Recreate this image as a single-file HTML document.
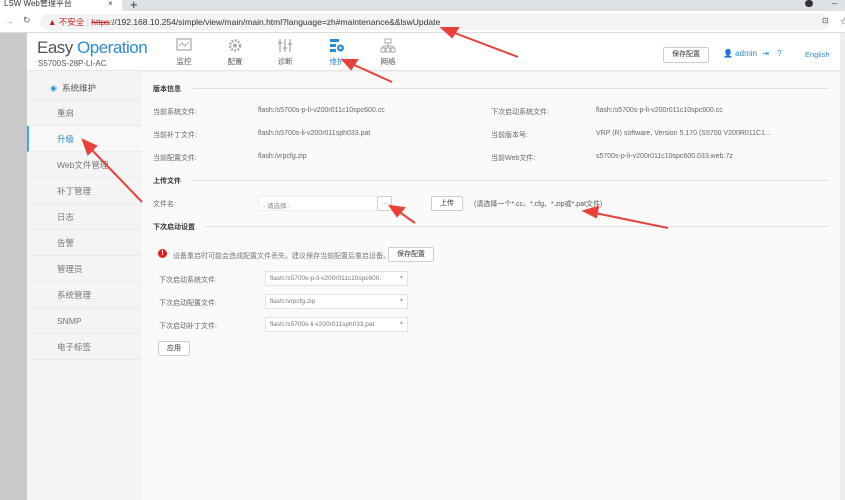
<!DOCTYPE html>
<html><head><meta charset="utf-8"><style>
*{margin:0;padding:0;box-sizing:border-box}
body{width:845px;height:500px;overflow:hidden;background:#fafafa;font-family:"Liberation Sans","Noto Sans CJK SC",sans-serif;position:relative;font-size:7px;color:#555}
.a{position:absolute;white-space:nowrap}
.tabbar{position:absolute;left:0;top:0;width:845px;height:11px;background:#dee1e6}
.tab{position:absolute;left:0;top:0;width:122px;height:11px;background:#fff;font-size:8px;color:#333;padding-left:4px;line-height:8px}
.addr{position:absolute;left:0;top:11px;width:845px;height:22px;background:#fff;border-bottom:1px solid #ddd}
.url{position:absolute;left:40px;top:14px;width:790px;height:16px;background:#f1f3f4;border-radius:8px}
.lstrip{position:absolute;left:0;top:33px;width:27px;height:467px;background:#c9c9c9}
.hdr{position:absolute;left:27px;top:33px;width:818px;height:37px;background:#fff;box-shadow:0 1px 2px #ddd}
.side{position:absolute;left:27px;top:71px;width:115px;height:429px;background:#f4f4f4}
.si{position:absolute;left:0;width:115px;height:26px;border-bottom:1px solid #ebebeb;font-size:8.5px;color:#777;padding-left:30px;line-height:26px}
.sec{position:absolute;font-size:7px;font-weight:bold;color:#333}
.line{position:absolute;height:1px;background:#e2e2e2}
.lbl{position:absolute;font-size:7px;color:#666;white-space:nowrap}
.btn{position:absolute;border:1px solid #ccc;border-radius:2px;background:#fff;font-size:7px;color:#333;text-align:center}
.sel{position:absolute;left:265px;width:143px;height:15px;border:1px solid #e3e3e3;background:#fff;font-size:6.5px;color:#777;padding-left:4px;line-height:13px;white-space:nowrap;overflow:hidden}
.sel:after{content:"▾";position:absolute;right:4px;top:0;color:#aaa;font-size:6px}
.sel span{display:inline-block;width:118px;overflow:hidden}
.nav{position:absolute;top:38px;width:30px;text-align:center;font-size:7.5px;color:#555}
.nav svg{display:block;margin:0 auto 3px}
</style></head><body>
<div class="tabbar"></div>
<div class="tab">LSW Web管理平台<span style="position:absolute;left:108px;color:#333">×</span></div>
<div class="a" style="left:130px;top:-3px;font-size:13px;color:#333">+</div>
<div class="a" style="left:805px;top:0;width:8px;height:7px;border-radius:4px;background:#333"></div>
<div class="a" style="left:832px;top:-2px;font-size:9px;color:#333">–</div>
<div class="addr"></div>
<div class="a" style="left:5px;top:16px;font-size:9px;color:#999">→</div>
<div class="a" style="left:23px;top:15px;font-size:9px;color:#666">↻</div>
<div class="url"></div>
<div class="a" style="left:48px;top:16px;font-size:8.5px;color:#333"><span style="color:#c5221f">▲ 不安全</span> <span style="color:#ccc">|</span> <span style="color:#c5221f;text-decoration:line-through">https</span>://192.168.10.254/simple/view/main/main.html?language=zh#maintenance&amp;&amp;lswUpdate</div>
<div class="a" style="left:822px;top:16px;font-size:8px;color:#555">⊡</div>
<div class="a" style="left:840px;top:16px;font-size:8px;color:#555">☆</div>
<div class="lstrip"></div>
<div class="hdr"></div>
<div class="a" style="left:37px;top:38px;font-size:17px;letter-spacing:-0.5px;color:#555">Easy <span style="color:#2b8cd1">Operation</span></div>
<div class="a" style="left:38px;top:59px;font-size:8px;color:#555">S5700S-28P-LI-AC</div>
<div class="nav" style="left:169px"><svg width="16" height="15"><rect x="1" y="1" width="14" height="11" fill="none" stroke="#aaa" stroke-width="1.3"/><path d="M3 8 L6 5 L9 8 L13 4" fill="none" stroke="#aaa"/></svg>监控</div>
<div class="nav" style="left:220px"><svg width="16" height="15"><circle cx="8" cy="7.5" r="5" fill="none" stroke="#aaa" stroke-width="2.5" stroke-dasharray="2 1.3"/><circle cx="8" cy="7.5" r="2" fill="#aaa"/></svg>配置</div>
<div class="nav" style="left:270px"><svg width="16" height="15"><path d="M3 1V14M8 1V14M13 1V14" stroke="#aaa" stroke-width="1.3"/><path d="M1 5H5M6 10H10M11 6H15" stroke="#aaa" stroke-width="1.5"/></svg>诊断</div>
<div class="nav" style="left:322px;color:#2b8cd1"><svg width="16" height="15"><rect x="1" y="1" width="9" height="3" fill="#2b8cd1"/><rect x="1" y="6" width="6" height="3" fill="#2b8cd1"/><rect x="1" y="11" width="6" height="3" fill="#2b8cd1"/><circle cx="11.5" cy="10" r="3.5" fill="#2b8cd1"/><circle cx="11.5" cy="10" r="1.2" fill="#fff"/></svg>维护</div>
<div class="nav" style="left:373px"><svg width="16" height="15"><rect x="5" y="1" width="6" height="4" fill="none" stroke="#aaa"/><path d="M8 5V8M3 8H13M3 8V10M8 8V10M13 8V10" stroke="#aaa" fill="none"/><rect x="1" y="10" width="4" height="4" fill="none" stroke="#aaa"/><rect x="6" y="10" width="4" height="4" fill="none" stroke="#aaa"/><rect x="11" y="10" width="4" height="4" fill="none" stroke="#aaa"/></svg>网络</div>
<div class="btn" style="left:663px;top:47px;width:46px;height:16px;line-height:14px">保存配置</div>
<div class="a" style="left:723px;top:49px;font-size:8px;color:#2b8cd1">👤 admin <span style="margin-left:3px">⇥</span> <span style="margin-left:6px">?</span></div>
<div class="a" style="left:805px;top:50px;font-size:7.5px;color:#2b8cd1">English</div>
<div class="side">
<div class="si" style="top:4px;padding-left:23px;color:#555"><span style="color:#2b8cd1;font-size:7px;margin-right:5px">◉</span>系统维护</div>
<div class="si" style="top:29px">重启</div>
<div class="si" style="top:55px;color:#2b8cd1;background:#f8f8f8;border-left:2px solid #41a7e6;padding-left:28px">升级</div>
<div class="si" style="top:81px">Web文件管理</div>
<div class="si" style="top:107px">补丁管理</div>
<div class="si" style="top:133px">日志</div>
<div class="si" style="top:159px">告警</div>
<div class="si" style="top:185px">管理员</div>
<div class="si" style="top:211px">系统管理</div>
<div class="si" style="top:237px">SNMP</div>
<div class="si" style="top:263px">电子标签</div>
</div>
<div class="sec" style="left:153px;top:84px">版本信息</div><div class="line" style="left:193px;top:88px;width:636px"></div>
<div class="lbl" style="left:153px;top:107px">当前系统文件:</div><div class="lbl" style="left:258px;top:107px">flash:/s5700s-p-li-v200r011c10spc600.cc</div>
<div class="lbl" style="left:491px;top:107px">下次启动系统文件:</div><div class="lbl" style="left:596px;top:107px">flash:/s5700s-p-li-v200r011c10spc600.cc</div>
<div class="lbl" style="left:153px;top:130px">当前补丁文件:</div><div class="lbl" style="left:258px;top:130px">flash:/s5700s-li-v200r011sph033.pat</div>
<div class="lbl" style="left:491px;top:130px">当前版本号:</div><div class="lbl" style="left:596px;top:130px">VRP (R) software, Version 5.170 (S5700 V200R011C1...</div>
<div class="lbl" style="left:153px;top:153px">当前配置文件:</div><div class="lbl" style="left:258px;top:153px">flash:/vrpcfg.zip</div>
<div class="lbl" style="left:491px;top:153px">当前Web文件:</div><div class="lbl" style="left:596px;top:153px">s5700s-p-li-v200r011c10spc600.033.web.7z</div>
<div class="sec" style="left:153px;top:176px">上传文件</div><div class="line" style="left:193px;top:180px;width:636px"></div>
<div class="lbl" style="left:153px;top:199px">文件名:</div>
<div class="a" style="left:258px;top:196px;width:120px;height:15px;background:#fff;border:1px solid #eee;font-size:6.5px;color:#888;padding:3px 4px">- 请选择 -</div>
<div class="btn" style="left:377px;top:196px;width:15px;height:15px;line-height:12px;color:#888">...</div>
<div class="btn" style="left:431px;top:196px;width:32px;height:15px;line-height:13px">上传</div>
<div class="lbl" style="left:474px;top:199px;color:#555">(请选择一个*.cc、*.cfg、*.zip或*.pat文件)</div>
<div class="sec" style="left:153px;top:222px">下次启动设置</div><div class="line" style="left:205px;top:226px;width:624px"></div>
<div class="a" style="left:158px;top:249px;width:9px;height:9px;border-radius:5px;background:#e0201a;color:#fff;font-size:7px;text-align:center;line-height:9px;font-weight:bold">!</div>
<div class="lbl" style="left:173px;top:251px;color:#777">设备重启时可能会造成配置文件丢失。建议保存当前配置后重启设备。</div>
<div class="btn" style="left:388px;top:247px;width:46px;height:15px;line-height:13px">保存配置</div>
<div class="lbl" style="left:159px;top:275px">下次启动系统文件:</div>
<div class="sel" style="top:271px"><span>flash:/s5700s-p-li-v200r011c10spc600.</span></div>
<div class="lbl" style="left:159px;top:298px">下次启动配置文件:</div>
<div class="sel" style="top:294px"><span>flash:/vrpcfg.zip</span></div>
<div class="lbl" style="left:159px;top:321px">下次启动补丁文件:</div>
<div class="sel" style="top:317px"><span>flash:/s5700s-li-v200r011sph033.pat</span></div>
<div class="btn" style="left:158px;top:341px;width:32px;height:15px;line-height:13px">应用</div>
<div class="a" style="left:840px;top:33px;width:5px;height:467px;background:#eee"></div>
<svg class="a" style="left:0;top:0" width="845" height="500">
<g stroke="#e8413a" stroke-width="2" fill="#e8413a">
<line x1="518" y1="57" x2="452" y2="32"/><polygon points="442,28 458,28 452,37"/>
<line x1="392" y1="82" x2="352" y2="64"/><polygon points="343,60 357,60 351,69"/>
<line x1="142" y1="202" x2="90" y2="148"/><polygon points="83,140 96,146 88,154"/>
<line x1="415" y1="223" x2="398" y2="211"/><polygon points="390,206 404,208 397,216"/>
<line x1="668" y1="228" x2="595" y2="213"/><polygon points="584,211 598,207 596,217"/>
</g></svg>
</body></html>
